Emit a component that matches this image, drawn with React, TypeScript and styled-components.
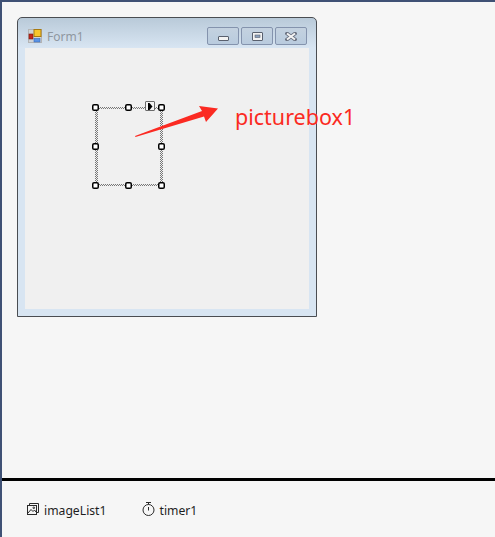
import React from "react";
import styled, { createGlobalStyle } from "styled-components";

const Global = createGlobalStyle`
  html, body { margin: 0; padding: 0; background: #f6f6f6; }
  #root { width: 495px; height: 537px; overflow: hidden; }
`;

const Page = styled.div`
  box-sizing: border-box;
  width: 495px;
  height: 537px;
  display: flex;
  flex-direction: column;
  background: #f6f6f6;
  border-top: 2px solid #3f5175;
  border-left: 2px solid #3f5175;
  font-family: "Noto Sans", "Open Sans", sans-serif;
`;

const DesignSurface = styled.div`
  box-sizing: border-box;
  height: 479px;
  padding: 15px 0 0 15px;
  border-bottom: 3px solid #000;
  flex: none;
`;

const FormWindow = styled.div`
  box-sizing: border-box;
  width: 300px;
  height: 300px;
  padding: 0 7px 7px;
  display: flex;
  flex-direction: column;
  border: 1px solid #4a4d52;
  border-radius: 5px 5px 0 0;
  background: linear-gradient(180deg, #b9cad9 0%, #d8e5f2 10%, #d8e5f2 100%);
`;

const TitleBar = styled.div`
  height: 30px;
  flex: none;
  display: flex;
  align-items: flex-start;
  padding-left: 3px;
  gap: 5px;
`;

const FormIcon = styled.svg`
  flex: none;
  margin-top: 11px;
`;

const TitleText = styled.span`
  font-size: 12px;
  line-height: 16px;
  color: #8f979f;
  flex: 1;
  margin-top: 11px;
`;

const CaptionGroup = styled.div`
  display: flex;
  gap: 2px;
  margin: 9px 2px 0 0;
`;

const CaptionButton = styled.div`
  box-sizing: border-box;
  width: 32px;
  height: 18px;
  border: 1px solid #8493ad;
  border-radius: 2px;
  background: linear-gradient(180deg, #c4d2e0, #b9cbde);
  display: flex;
  align-items: flex-end;
  justify-content: center;
  padding-bottom: 3px;
`;

const ClientArea = styled.div`
  position: relative;
  flex: 1;
  background: #f0f0f0;
`;

const SelectionFrame = styled.div`
  position: absolute;
  left: 70px;
  top: 59px;
  width: 68px;
  height: 79px;
  box-sizing: border-box;
  padding: 2px 3px;
  background: repeating-conic-gradient(#777 0 25%, #f0f0f0 0 50%) 0 0 / 2px 2px;
`;

const SelectionInner = styled.div`
  width: 100%;
  height: 100%;
  background: #f0f0f0;
`;

const Handle = styled.span<{ $x: number; $y: number }>`
  position: absolute;
  width: 7px;
  height: 7px;
  left: ${(p) => p.$x}px;
  top: ${(p) => p.$y}px;
  border-radius: 2px;
  background: #fff;
  box-shadow: inset 0 0 0 1.5px #000;
`;

const SmartTag = styled.span`
  position: absolute;
  left: 120px;
  top: 53px;
  box-sizing: border-box;
  width: 10px;
  height: 10px;
  border: 1px solid #6b6b6b;
  border-radius: 1px;
  background: #f4f4f4;
  display: flex;
  align-items: center;
  justify-content: center;
`;

const ArrowSvg = styled.svg`
  position: absolute;
  left: 110px;
  top: 56px;
`;

const Callout = styled.span`
  position: absolute;
  left: 210px;
  top: 53px;
  color: #fb2a22;
  font-size: 21.5px;
  line-height: 32px;
  white-space: nowrap;
  font-family: "Noto Sans", sans-serif;
`;

const Tray = styled.div`
  flex: 1;
  display: flex;
  align-items: center;
  gap: 35px;
  padding: 3px 0 0 25px;
`;

const TrayItem = styled.div`
  display: flex;
  align-items: center;
  gap: 5px;
  font-size: 12.2px;
  color: #1e1e1e;
`;

const TrayIcon = styled.svg`
  flex: none;
  margin-top: -3px;
`;

const handles = [
  [67, 56], [100, 56], [133, 56],
  [67, 95], [133, 95],
  [67, 134], [100, 134], [133, 134],
];

export default function App() {
  return (
    <>
      <Global />
      <Page>
        <DesignSurface>
          <FormWindow>
            <TitleBar>
              <FormIcon width="14" height="14" viewBox="0 0 14 14">
                <rect x="0.5" y="0.5" width="13" height="13" fill="#cfd3d8" stroke="#b4b4b4" />
                <rect x="1" y="5" width="4" height="5" fill="#c4281c" stroke="#7c1610" strokeWidth="0.6" />
                <rect x="6" y="0.5" width="7" height="7" fill="#f8c62c" stroke="#a87a10" />
                <rect x="6" y="9.5" width="6" height="3.5" fill="#5a93e6" stroke="#3b6cb8" strokeWidth="0.6" />
              </FormIcon>
              <TitleText>Form1</TitleText>
              <CaptionGroup>
                <CaptionButton>
                  <svg width="11" height="5" viewBox="0 0 11 5">
                    <rect x="0.5" y="0.5" width="10" height="4" rx="0.5" fill="#f2f2f2" stroke="#59606e" />
                  </svg>
                </CaptionButton>
                <CaptionButton>
                  <svg width="11" height="9" viewBox="0 0 11 9">
                    <rect x="0.5" y="0.5" width="10" height="8" rx="0.5" fill="#f2f2f2" stroke="#59606e" />
                    <rect x="3" y="3" width="5" height="2.5" fill="#8aa0bc" stroke="#59606e" strokeWidth="0.6" />
                  </svg>
                </CaptionButton>
                <CaptionButton>
                  <svg width="12" height="9" viewBox="0 0 12 9">
                    <path d="M2 1.5 L10 7.5 M10 1.5 L2 7.5" stroke="#6a7180" strokeWidth="3.6" strokeLinecap="square" />
                    <path d="M2 1.5 L10 7.5 M10 1.5 L2 7.5" stroke="#f4f4f4" strokeWidth="2" />
                  </svg>
                </CaptionButton>
              </CaptionGroup>
            </TitleBar>
            <ClientArea>
              <SelectionFrame>
                <SelectionInner />
              </SelectionFrame>
              {handles.map(([x, y], i) => (
                <Handle key={i} $x={x} $y={y} />
              ))}
              <SmartTag>
                <svg width="6" height="7" viewBox="0 0 6 7">
                  <path d="M1 0 H2.5 L5.5 3.5 L2.5 7 H1 Z" fill="#000" />
                </svg>
              </SmartTag>
              <ArrowSvg width="84" height="34" viewBox="0 0 84 34">
                <path d="M0 32 L0.5 33 L69 12.5 L71 18 L83 4.5 L64 2 L67 7 Z" fill="#fb2a22" />
              </ArrowSvg>
              <Callout>picturebox1</Callout>
            </ClientArea>
          </FormWindow>
        </DesignSurface>
        <Tray>
          <TrayItem>
            <TrayIcon width="12" height="12" viewBox="0 0 12 12" fill="none" stroke="#2a2a2a">
              <rect x="0.5" y="2.5" width="9" height="9" />
              <path d="M2.5 2.5 V0.5 H11.5 V9.5 H9.5" />
              <path d="M1 10 L4 6.5 L6 8.5 L7.5 7 L9 9" />
              <circle cx="6.8" cy="4.8" r="0.8" />
            </TrayIcon>
            imageList1
          </TrayItem>
          <TrayItem>
            <TrayIcon width="13" height="14" viewBox="0 0 13 14" fill="none" stroke="#2a2a2a">
              <circle cx="6.5" cy="8" r="5.5" />
              <path d="M4 0.5 H9 M6.5 0.5 V2.5 M6.5 5 V8.5" />
            </TrayIcon>
            timer1
          </TrayItem>
        </Tray>
      </Page>
    </>
  );
}
